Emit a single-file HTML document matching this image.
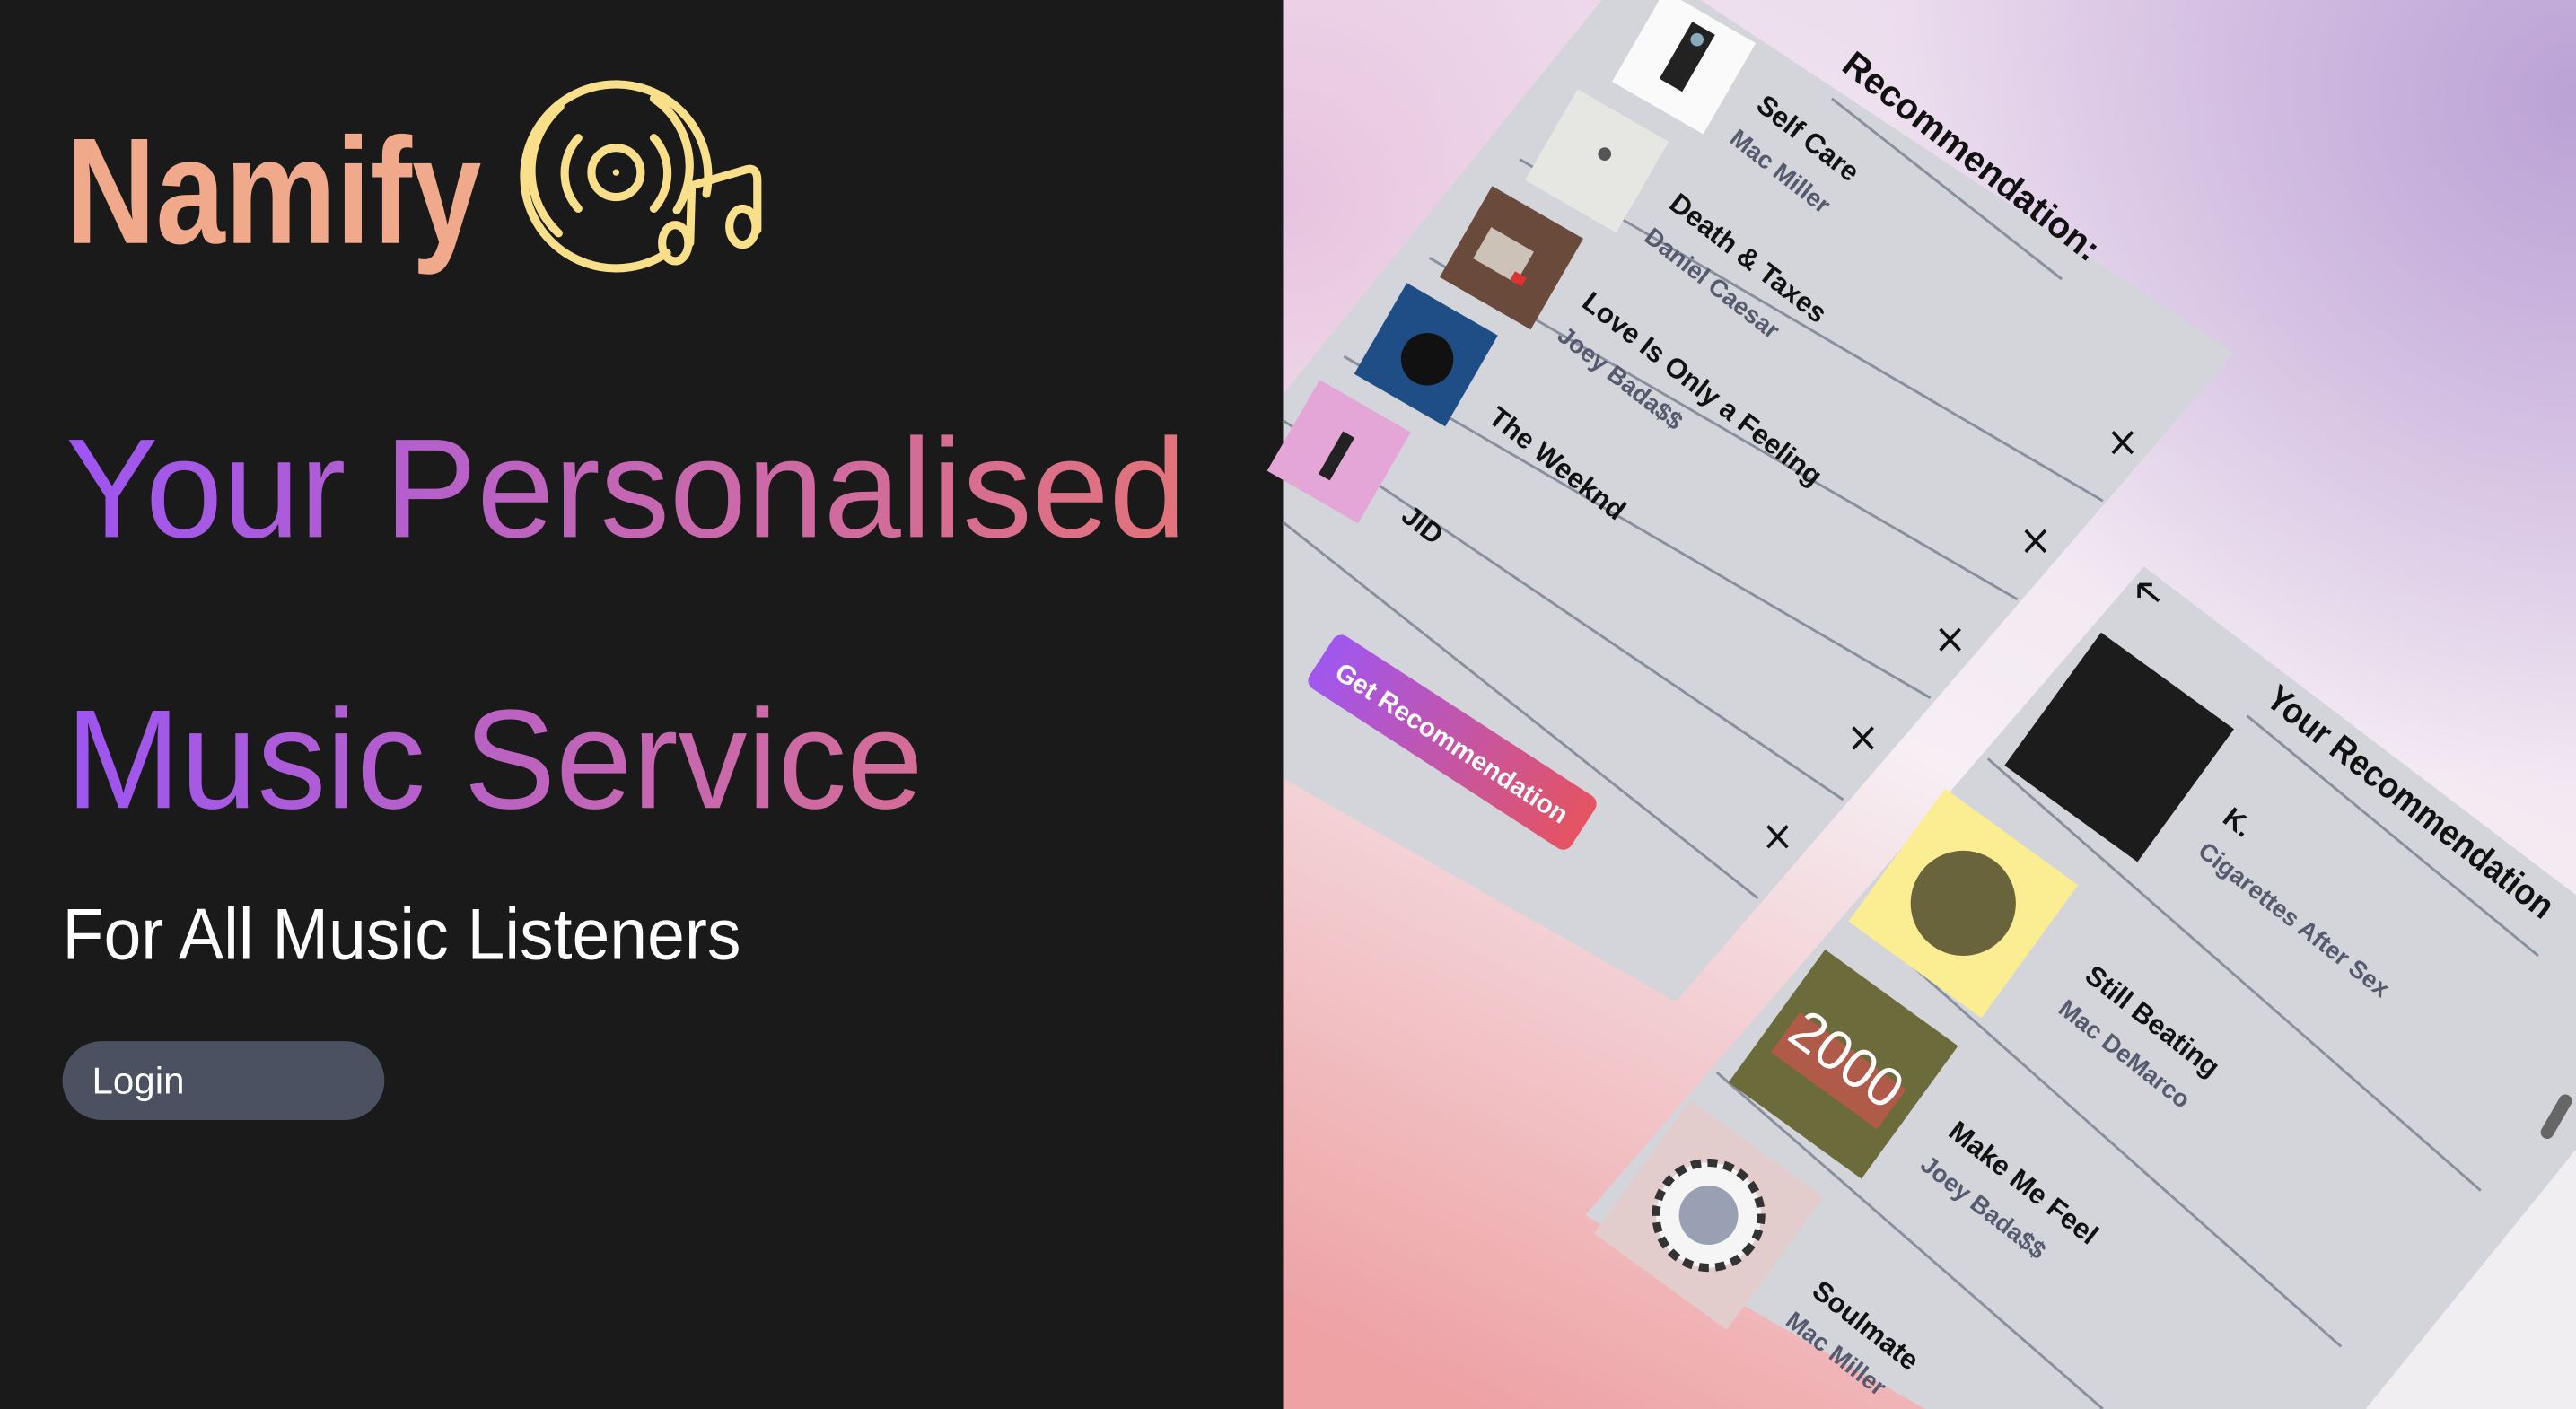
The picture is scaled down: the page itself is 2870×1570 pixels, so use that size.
<!DOCTYPE html>
<html><head><meta charset="utf-8"><style>
html,body{margin:0;padding:0;background:#1a1a1a;overflow:hidden}
svg{display:block;width:2870px;height:1570px}
</style></head><body>
<svg viewBox="0 0 1568 858" preserveAspectRatio="none" xmlns="http://www.w3.org/2000/svg">
<defs>
<linearGradient id="tg" gradientUnits="userSpaceOnUse" x1="40" y1="0" x2="722" y2="0">
<stop offset="0" stop-color="#9c55f2"/><stop offset="0.5" stop-color="#c466b4"/><stop offset="1" stop-color="#e3737a"/></linearGradient>
<linearGradient id="bg1" gradientUnits="userSpaceOnUse" x1="1300" y1="0" x2="900" y2="858">
<stop offset="0" stop-color="#ebdaed"/><stop offset="0.5" stop-color="#f6eff4"/><stop offset="1" stop-color="#eea2a4"/></linearGradient>
<radialGradient id="bg2" gradientUnits="userSpaceOnUse" cx="1568" cy="60" r="420">
<stop offset="0" stop-color="#bba2d6"/><stop offset="1" stop-color="#bba2d6" stop-opacity="0"/></radialGradient>
<radialGradient id="bg3" gradientUnits="userSpaceOnUse" cx="781" cy="120" r="300">
<stop offset="0" stop-color="#e8c3df"/><stop offset="1" stop-color="#e8c3df" stop-opacity="0"/></radialGradient>
<linearGradient id="btn" gradientUnits="userSpaceOnUse" x1="-95" y1="0" x2="95" y2="0">
<stop offset="0" stop-color="#a057f0"/><stop offset="1" stop-color="#e55460"/></linearGradient>
</defs>
<rect width="781" height="858" fill="#1a1a1a"/>
<rect x="781" width="787" height="858" fill="url(#bg1)"/>
<rect x="781" width="787" height="858" fill="url(#bg2)"/>
<rect x="781" width="787" height="858" fill="url(#bg3)"/>

<!-- left -->
<text x="40" y="148" font-family="Liberation Sans Narrow, Liberation Sans, sans-serif" font-weight="bold" font-size="92" fill="#f0a98b" textLength="253" lengthAdjust="spacingAndGlyphs">Namify</text>
<g fill="none" stroke="#f9df8a" stroke-width="5" stroke-linecap="round">
<path d="M406 154 A56 56 0 1 1 430 118"/>
<circle cx="375" cy="105" r="15"/>
<path d="M352 84 A32 32 0 0 0 352 127"/><path d="M398 84 A32 32 0 0 1 398 127"/>
<path d="M341 65 A52 52 0 0 0 340 142"/><path d="M398 60 A50 50 0 0 1 412 128"/>
<path d="M420 148 L421 113 L455 103 Q461 102 461 110 L461 140"/>
<ellipse cx="411" cy="148" rx="8" ry="11"/><ellipse cx="452" cy="138" rx="8" ry="11"/>
</g>
<circle cx="375" cy="105" r="2" fill="#f9df8a"/>
<text x="40" y="327" font-family="Liberation Sans, sans-serif" font-size="86" fill="url(#tg)" textLength="682" lengthAdjust="spacingAndGlyphs">Your Personalised</text>
<text x="40" y="492" font-family="Liberation Sans, sans-serif" font-size="86" fill="url(#tg)" textLength="522" lengthAdjust="spacingAndGlyphs">Music Service</text>
<text x="38" y="584" font-family="Liberation Sans, sans-serif" font-size="44" fill="#ffffff" textLength="413" lengthAdjust="spacingAndGlyphs">For All Music Listeners</text>
<rect x="38" y="634" width="196" height="48" rx="24" fill="#4b5160"/>
<text x="56" y="666" font-family="Liberation Sans, sans-serif" font-size="23" fill="#ffffff">Login</text>

<!-- panel 1 -->
<polygon points="975,0 1035,0 1360,215 1020,610 781,474 781,240" fill="#d3d5db"/>
<g stroke="#8a8f9e" stroke-width="1.6">
<line x1="925" y1="97" x2="1280" y2="305"/>
<line x1="870" y1="157" x2="1228" y2="365"/>
<line x1="818" y1="217" x2="1175" y2="425"/>
<line x1="781" y1="256" x2="1122" y2="487"/>
<line x1="781" y1="318" x2="1070" y2="547"/>
<line x1="1115" y1="60" x2="1255" y2="170"/>
</g>
<g font-family="Liberation Sans, sans-serif" font-weight="bold">
<text transform="translate(1120,42) rotate(38)" font-size="22" fill="#111">Recommendation:</text>
<text transform="translate(1068,66) rotate(38)" font-size="17" fill="#111">Self Care</text>
<text transform="translate(1052,86) rotate(38)" font-size="15" fill="#555a6e">Mac Miller</text>
<text transform="translate(1015,126) rotate(38)" font-size="17" fill="#111">Death &amp; Taxes</text>
<text transform="translate(1000,146) rotate(38)" font-size="15" fill="#555a6e">Daniel Caesar</text>
<text transform="translate(962,186) rotate(38)" font-size="17" fill="#111">Love Is Only a Feeling</text>
<text transform="translate(947,206) rotate(38)" font-size="15" fill="#555a6e">Joey Bada$$</text>
<text transform="translate(905,256) rotate(38)" font-size="17" fill="#111">The Weeknd</text>
<text transform="translate(852,316) rotate(38)" font-size="17" fill="#111">JID</text>
</g>
<g stroke="#111" stroke-width="2">
<path d="M1286 263 l12 13 M1298 263 l-12 13"/>
<path d="M1233 323 l12 13 M1245 323 l-12 13"/>
<path d="M1181 383 l12 13 M1193 383 l-12 13"/>
<path d="M1128 443 l12 13 M1140 443 l-12 13"/>
<path d="M1076 503 l12 13 M1088 503 l-12 13"/>
</g>
<g transform="translate(1025,38) rotate(30)"><rect x="-32" y="-32" width="64" height="64" fill="#fafafa"/><rect x="-8" y="-24" width="16" height="40" fill="#222"/><circle cx="0" cy="-16" r="4" fill="#8ab"/></g>
<g transform="translate(972,98) rotate(30)"><rect x="-32" y="-32" width="64" height="64" fill="#e6e6e3"/><circle cx="2" cy="-6" r="4" fill="#555"/></g>
<g transform="translate(920,157) rotate(30)"><rect x="-32" y="-32" width="64" height="64" fill="#6a4a3a"/><rect x="-20" y="-10" width="30" height="22" fill="#ccc2b8"/><rect x="6" y="6" width="8" height="6" fill="#d33"/></g>
<g transform="translate(868,216) rotate(30)"><rect x="-32" y="-32" width="64" height="64" fill="#1f4e86"/><circle cx="2" cy="2" r="16" fill="#111"/></g>
<g transform="translate(815,275) rotate(30)"><rect x="-32" y="-32" width="64" height="64" fill="#e3a6d6"/><rect x="-4" y="-12" width="8" height="30" fill="#222"/></g>
<g transform="translate(884,452) rotate(33)"><rect x="-95" y="-19" width="190" height="38" rx="6" fill="url(#btn)"/>
<text x="0" y="6" text-anchor="middle" font-family="Liberation Sans, sans-serif" font-weight="bold" font-size="16" fill="#fff">Get Recommendation</text></g>

<!-- panel 2 -->
<polygon points="1305,345 1568,545 1568,700 1440,858 1172,858 965,740" fill="#d3d5db"/>
<polygon points="1568,700 1568,858 1440,858" fill="#f1eef1"/>
<g stroke="#8a8f9e" stroke-width="1.6">
<line x1="1210" y1="462" x2="1510" y2="725"/>
<line x1="1130" y1="558" x2="1425" y2="820"/>
<line x1="1045" y1="653" x2="1280" y2="858"/>
<line x1="1368" y1="436" x2="1545" y2="582"/>
</g>
<path d="M1302 356 l12 10 M1302 356 l0 8 M1302 356 l8 0" stroke="#111" stroke-width="2" fill="none"/>
<rect x="1552" y="665" width="8" height="30" rx="4" fill="#666" transform="rotate(30 1556 680)"/>
<g transform="translate(1290,455) rotate(36)"><rect x="-50" y="-50" width="100" height="100" fill="#1c1c1c"/></g>
<g transform="translate(1195,550) rotate(36)"><rect x="-50" y="-50" width="100" height="100" fill="#fbed91"/><circle r="32" fill="#3a3520" opacity="0.75"/></g>
<g transform="translate(1122,648) rotate(36)"><rect x="-50" y="-50" width="100" height="100" fill="#6b6b3c"/><rect x="-40" y="-10" width="80" height="30" fill="#b05a4a"/><text x="0" y="8" text-anchor="middle" font-family="Liberation Sans" font-size="34" fill="#fff">2000</text></g>
<g transform="translate(1040,740) rotate(36)"><rect x="-50" y="-50" width="100" height="100" fill="#e2cccc"/><circle r="32" fill="#f5f5f5" stroke="#333" stroke-width="5" stroke-dasharray="6 4"/><circle r="18" fill="#9aa0b3"/></g>
<g font-family="Liberation Sans, sans-serif" font-weight="bold">
<text transform="translate(1378,428) rotate(38)" font-size="22" fill="#111" textLength="215" lengthAdjust="spacingAndGlyphs">Your Recommendation</text>
<text transform="translate(1352,500) rotate(38)" font-size="17" fill="#111">K.</text>
<text transform="translate(1337,520) rotate(38)" font-size="15" fill="#555a6e">Cigarettes After Sex</text>
<text transform="translate(1268,596) rotate(38)" font-size="17" fill="#111">Still Beating</text>
<text transform="translate(1252,616) rotate(38)" font-size="15" fill="#555a6e">Mac DeMarco</text>
<text transform="translate(1185,691) rotate(38)" font-size="17" fill="#111">Make Me Feel</text>
<text transform="translate(1168,711) rotate(38)" font-size="15" fill="#555a6e">Joey Bada$$</text>
<text transform="translate(1102,788) rotate(38)" font-size="17" fill="#111">Soulmate</text>
<text transform="translate(1086,806) rotate(38)" font-size="15" fill="#555a6e">Mac Miller</text>
</g>
</svg>
</body></html>
